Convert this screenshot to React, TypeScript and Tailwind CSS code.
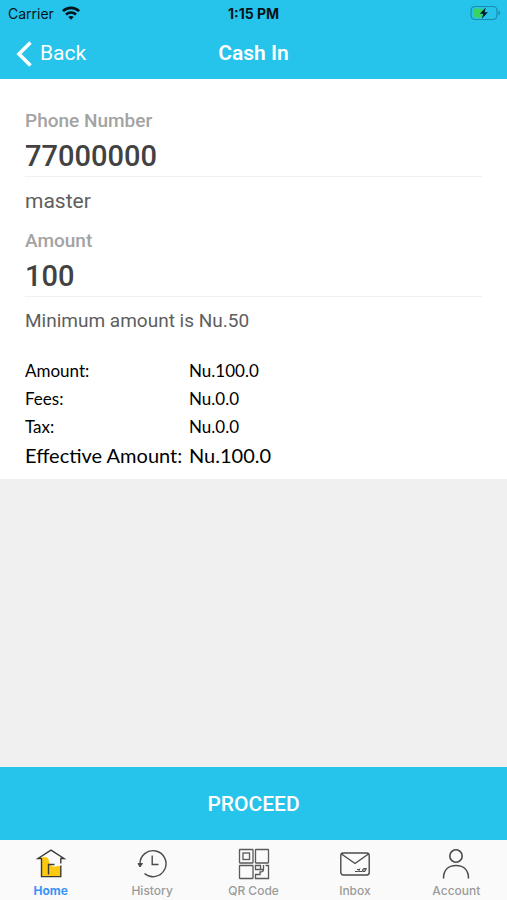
import type { ReactNode } from 'react'

const charges = [
  { label: 'Amount:', value: 'Nu.100.0' },
  { label: 'Fees:', value: 'Nu.0.0' },
  { label: 'Tax:', value: 'Nu.0.0' },
]

function WifiIcon() {
  return (
    <svg width="18" height="14" viewBox="0 0 18 14" fill="none" stroke="#04141a" strokeWidth="2.6" aria-hidden="true">
      <path d="M0.9 5.2C5.3 0.7 12.7 0.7 17.1 5.2" />
      <path d="M4 8.5C6.8 5.8 11.2 5.8 14 8.5" />
      <path d="M9 13.8L6.3 11C7.8 9.6 10.2 9.6 11.7 11Z" fill="#04141a" stroke="none" />
    </svg>
  )
}

function BatteryIcon() {
  return (
    <svg width="31" height="16" viewBox="0 0 31 16" aria-hidden="true">
      <rect x="1" y="1.5" width="26" height="13" rx="4" fill="none" stroke="#1b8cab" strokeWidth="1.2" />
      <rect x="3" y="3.5" width="10" height="9" rx="2" fill="#3cd25e" />
      <path d="M28.5 5.5C30.6 6.3 30.6 9.7 28.5 10.5Z" fill="#1b8cab" />
      <path d="M15.8 2.5L9.9 8.8H13.3L11.8 13.8L17.8 7.3H14.4Z" fill="#04141a" stroke="#26c3ea" strokeWidth="0.7" paintOrder="stroke" />
    </svg>
  )
}

function HomeIcon() {
  return (
    <svg width="32" height="32" viewBox="0 0 32 32" fill="none" aria-hidden="true">
      <path d="M6.5 9.5C11 8 13.5 9.5 14 13C14.5 16.5 16 18.5 19 18.5C22 18.5 23.5 17.5 25.8 18.5V28.5H6.5Z" fill="#fdc90f" />
      <g stroke="#3d3b36" strokeWidth="1.4">
        <path d="M6.5 10.5H3L16 2.2L29 10.5H25.8V15.5M6.5 10V28.6H25.8V17.5" />
        <path d="M13.5 26.5V16.5H19.5" />
      </g>
    </svg>
  )
}

function HistoryIcon() {
  return (
    <svg width="32" height="32" viewBox="0 0 32 32" fill="none" stroke="#4a4a4a" strokeWidth="1.4" aria-hidden="true">
      <path d="M4 16A13 13 0 1 1 8.5 25.5" />
      <path d="M16.2 7.5V16.5H22.5" />
      <path d="M2 15.5H6.5L4 19Z" fill="#4a4a4a" strokeWidth="1" />
    </svg>
  )
}

function QrIcon() {
  return (
    <svg width="32" height="32" viewBox="0 0 32 32" fill="none" stroke="#5a5a5a" strokeWidth="1.3" aria-hidden="true">
      <rect x="1.5" y="1.5" width="13.5" height="13.5" rx="0.5" />
      <rect x="5" y="5" width="6.5" height="6.5" />
      <rect x="17.5" y="1.5" width="13" height="13.5" rx="0.5" />
      <rect x="1.5" y="17.5" width="13.5" height="13" rx="0.5" />
      <path d="M17.5 17.5H22.5V21.5H17.5Z" />
      <path d="M25.5 17V21.5C25.5 23.5 24.5 24 22 24V26.5H17.5V30.5H30.5V17.5H27.5M22.5 21.5H25.5" />
    </svg>
  )
}

function InboxIcon() {
  return (
    <svg width="32" height="32" viewBox="0 0 32 32" fill="none" stroke="#4a4a4a" strokeWidth="1.4" aria-hidden="true">
      <rect x="1.8" y="5" width="28.4" height="22" rx="2.5" />
      <path d="M2.5 6L16 15.5L29.5 6" />
      <path d="M16 23.5H19.5L21 20.5M18 21.5H21M20 23.5H23L24.5 20.5H27.5L26 23.5H23.5M23 22H27" strokeWidth="1" />
    </svg>
  )
}

function AccountIcon() {
  return (
    <svg width="32" height="32" viewBox="0 0 32 32" fill="none" stroke="#4a4a4a" strokeWidth="1.6" aria-hidden="true">
      <circle cx="16" cy="8" r="6.2" />
      <path d="M3.5 30.5C3.5 22 8.5 17.5 16 17.5S28.5 22 28.5 30.5" />
    </svg>
  )
}

function Tab({ label, active, children }: { label: string; active?: boolean; children: ReactNode }) {
  return (
    <a
      href="#"
      aria-current={active ? 'page' : undefined}
      className={
        active
          ? 'flex flex-1 flex-col items-center pt-2 font-bold text-[#3b93f7]'
          : 'flex flex-1 flex-col items-center pt-2 font-medium text-[#9b9b9b]'
      }
    >
      {children}
      <span className="mt-[3px] text-[12px] leading-4">{label}</span>
    </a>
  )
}

function Field({ id, label, value, children }: { id: string; label: string; value: string; children: ReactNode }) {
  return (
    <div className="flex flex-col">
      <label htmlFor={id} className="text-[19px] font-medium leading-6 text-[#a3a3a3]">{label}</label>
      <input
        id={id}
        type="text"
        inputMode="numeric"
        defaultValue={value}
        className="h-11 w-full border-b border-[#f0f0f0] pt-0.5 text-[29px] font-medium text-[#424242] outline-none"
      />
      {children}
    </div>
  )
}

export default function App() {
  return (
    <div className="flex min-h-screen flex-col bg-[#f0f0f0] font-['Roboto',sans-serif]">
      <header className="bg-[#26c3ea]">
        <div className="grid h-7 grid-cols-3 items-center px-2 pb-0.5 font-['Inter',sans-serif] text-[14px] text-[#04141a]">
          <div className="flex items-center gap-2">
            <span>Carrier</span>
            <WifiIcon />
          </div>
          <span className="text-center font-bold">1:15 PM</span>
          <div className="-mr-0.5 flex justify-end">
            <BatteryIcon />
          </div>
        </div>
        <div className="grid h-[51px] grid-cols-3 items-center px-4 text-white">
          <button type="button" className="flex items-center gap-2 text-[21px]">
            <svg width="16" height="26" viewBox="0 0 16 26" fill="none" stroke="currentColor" strokeWidth="3.6" aria-hidden="true">
              <path d="M14.5 1.5L3 13L14.5 24.5" />
            </svg>
            Back
          </button>
          <h1 className="text-center text-[21px] font-semibold">Cash In</h1>
        </div>
      </header>

      <main className="flex flex-1 flex-col">
        <section className="flex flex-col gap-4 bg-white px-[25px] pb-2.5 pt-[30px]">
          <Field id="phone" label="Phone Number" value="77000000">
            <p className="mt-3 text-[21px] leading-6 text-[#5e5e5e]">master</p>
          </Field>
          <Field id="amount" label="Amount" value="100">
            <p className="mt-3 text-[19px] leading-6 text-[#5e5e5e]">Minimum amount is Nu.50</p>
          </Field>

          <table className="mt-2 w-full table-fixed text-left font-['Lato',sans-serif] text-black">
            <tbody>
              {charges.map((c) => (
                <tr key={c.label} className="text-[17px] leading-7">
                  <th scope="row" className="w-[164px] font-normal">{c.label}</th>
                  <td>{c.value}</td>
                </tr>
              ))}
              <tr className="text-[20px] leading-7">
                <th scope="row" className="whitespace-nowrap font-normal">Effective Amount:</th>
                <td>Nu.100.0</td>
              </tr>
            </tbody>
          </table>
        </section>
      </main>

      <button type="button" className="h-[73px] w-full bg-[#26c3ea] pt-0.5 text-[21px] font-medium text-white">
        PROCEED
      </button>

      <nav className="flex h-[60px] bg-[#fafafa] font-['Inter',sans-serif]">
        <Tab label="Home" active><HomeIcon /></Tab>
        <Tab label="History"><HistoryIcon /></Tab>
        <Tab label="QR Code"><QrIcon /></Tab>
        <Tab label="Inbox"><InboxIcon /></Tab>
        <Tab label="Account"><AccountIcon /></Tab>
      </nav>
    </div>
  )
}
